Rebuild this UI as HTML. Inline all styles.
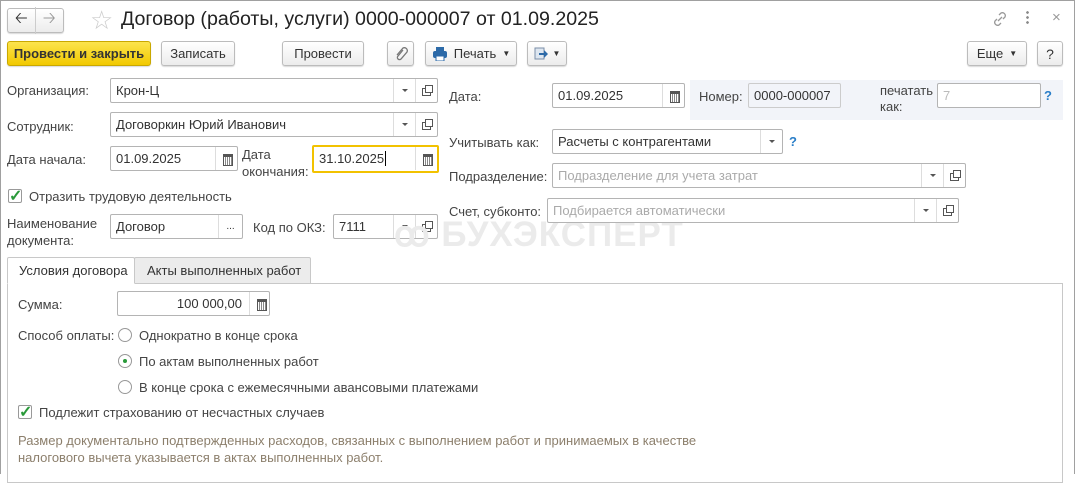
<!DOCTYPE html>
<html><head><meta charset="utf-8"><style>
*{box-sizing:border-box;margin:0;padding:0}
body{width:1075px;height:474px;background:#fff;font-family:"Liberation Sans",Arial,sans-serif;font-size:13px;color:#333;position:relative;overflow:hidden}
.a{position:absolute;white-space:nowrap}
.frame{position:absolute;left:0;top:0;width:1075px;height:474px;border:1px solid #a0a0a0;border-bottom:none}
.btn{position:absolute;height:25px;border:1px solid #bcbcbc;border-radius:3px;background:linear-gradient(#fff,#ececec);box-shadow:0 1px 1px rgba(0,0,0,.15);font-size:13px;color:#333;display:flex;align-items:center;justify-content:center}
.f{position:absolute;height:25px;border:1px solid #b4b4b4;border-radius:2px;background:#fff;padding-left:5px;line-height:23px;color:#333;font-size:13px}
.ph{color:#aaa}
.dd{position:absolute;top:0;width:22px;height:23px;border-left:1px solid #ddd}
.dd::after{content:"";position:absolute;left:8px;top:10px;border:3px solid transparent;border-top:3px solid #555;border-bottom:none}
.op{position:absolute;top:0;width:22px;height:23px;border-left:1px solid #ddd}
.op::before{content:"";position:absolute;left:6px;top:9px;width:7px;height:6px;border:1px solid #555}
.op::after{content:"";position:absolute;left:9px;top:6px;width:6px;height:6px;border:1px solid #555;background:#fff}
.cal{position:absolute;top:0;right:0;width:22px;height:23px;border-left:1px solid #ddd}
.cal::after{content:"";position:absolute;left:7px;top:7px;width:8px;height:8px;border:1px solid #555;border-top:3px solid #555;background:repeating-linear-gradient(90deg,#fff 0 1px,#888 1px 2px)}
.lbl{position:absolute;white-space:nowrap;color:#444}
.q{position:absolute;color:#2a7ec8;font-weight:bold}
.radio{position:absolute;width:14px;height:14px;border:1px solid #999;border-radius:50%;background:#fff}
.chk{position:absolute;width:14px;height:14px;border:1px solid #999;border-radius:2px;background:#fff}
</style></head><body>
<div class="frame"></div>
<div class="btn" style="left:7px;top:8px;width:57px;height:25px;justify-content:flex-start">
<span style="width:28px;text-align:center;font-size:16px;color:#333;border-right:1px solid #ccc">&#129120;</span><span style="width:28px;text-align:center;font-size:16px;color:#999">&#129122;</span></div>
<div class="a" style="left:90px;top:5px;font-size:26px;color:#ccc">☆</div>
<div class="a" style="left:121px;top:8px;font-size:19.6px;color:#222">Договор (работы, услуги) 0000-000007 от 01.09.2025</div>
<svg class="a" style="left:991px;top:10px" width="18" height="18" viewBox="0 0 18 18"><g fill="none" stroke="#999" stroke-width="1.3"><path d="M8 5l2-2a3 3 0 014 4l-2 2M10 13l-2 2a3 3 0 01-4-4l2-2M7 11l4-4"/></g></svg>
<div class="a" style="left:1026px;top:10px;width:3px;height:15px;background:radial-gradient(circle,#888 1.2px,transparent 1.5px) 0 0/3px 5px"></div>
<div class="a" style="left:1052px;top:9px;color:#999;font-size:15px">×</div>
<div class="btn" style="left:7px;top:41px;width:144px;background:linear-gradient(#fce44d,#f2c900);border-color:#c9a800;font-weight:bold;color:#333">Провести и закрыть</div>
<div class="btn" style="left:161px;top:41px;width:74px">Записать</div>
<div class="btn" style="left:282px;top:41px;width:82px">Провести</div>
<div class="btn" style="left:387px;top:41px;width:27px"><svg width="14" height="16" viewBox="0 0 14 16"><path d="M9 4L4 10a2 2 0 003 3l6-7a3 3 0 00-4-4L3 9" fill="none" stroke="#777" stroke-width="1.3"/></svg></div>
<div class="btn" style="left:425px;top:41px;width:92px"><svg width="16" height="14" viewBox="0 0 16 14" style="margin-right:6px"><rect x="4" y="0" width="8" height="4" fill="#2c6aa8"/><rect x="1" y="4" width="14" height="7" rx="2" fill="#2c6aa8"/><rect x="4" y="9" width="8" height="5" fill="#fff" stroke="#2c6aa8"/></svg>Печать <span style="font-size:8px;margin-left:6px">▼</span></div>
<div class="btn" style="left:527px;top:41px;width:40px"><svg width="14" height="14" viewBox="0 0 14 14"><rect x="1" y="1" width="9" height="11" fill="#dde6f0" stroke="#7a8ea8"/><path d="M5 6h5V3l4 4-4 4V8H5z" fill="#2c6aa8"/></svg><span style="font-size:8px;margin-left:5px">▼</span></div>
<div class="btn" style="left:967px;top:41px;width:60px">Еще <span style="font-size:8px;margin-left:6px">▼</span></div>
<div class="btn" style="left:1037px;top:41px;width:26px;font-size:14px">?</div>
<div class="lbl" style="left:7px;top:83px">Организация:</div>
<div class="f" style="left:110px;top:78px;width:328px">Крон-Ц<div class="dd" style="left:282px"></div><div class="op" style="left:304px"></div></div>
<div class="lbl" style="left:7px;top:119px">Сотрудник:</div>
<div class="f" style="left:110px;top:112px;width:328px">Договоркин Юрий Иванович<div class="dd" style="left:282px"></div><div class="op" style="left:304px"></div></div>
<div class="lbl" style="left:7px;top:152px">Дата начала:</div>
<div class="f" style="left:110px;top:146px;width:128px">01.09.2025<div class="cal"></div></div>
<div class="lbl" style="left:242px;top:146px;line-height:17px">Дата<br>окончания:</div>
<div class="f" style="left:312px;top:145px;width:127px;height:28px;border:2px solid #f2c200;line-height:23px">31.10.2025<span style="border-left:1px solid #000;margin-left:1px"></span><div class="cal"></div></div>
<div class="chk" style="left:8px;top:189px"></div>
<div class="a" style="left:9px;top:186px;color:#2a9a3a;font-size:16px;font-weight:bold">✓</div>
<div class="lbl" style="left:29px;top:189px">Отразить трудовую деятельность</div>
<div class="lbl" style="left:7px;top:215px;line-height:17px">Наименование<br>документа:</div>
<div class="f" style="left:110px;top:214px;width:133px">Договор<div style="position:absolute;left:107px;top:0;width:24px;height:23px;border-left:1px solid #ddd;text-align:center;font-size:10px">...</div></div>
<div class="lbl" style="left:253px;top:220px">Код по ОКЗ:</div>
<div class="f" style="left:333px;top:214px;width:105px">7111<div class="dd" style="left:59px"></div><div class="op" style="left:81px"></div></div>
<div class="a" style="left:394px;top:215px;font-size:35px;font-weight:bold;color:#ebebeb;letter-spacing:1px">ꝏ БУХЭКСПЕРТ</div>
<div class="lbl" style="left:449px;top:89px">Дата:</div>
<div class="f" style="left:552px;top:83px;width:133px">01.09.2025<div class="cal"></div></div>
<div class="a" style="left:690px;top:80px;width:373px;height:40px;background:#f2f4f9"></div>
<div class="lbl" style="left:699px;top:89px">Номер:</div>
<div class="f" style="left:748px;top:83px;width:93px;background:#f2f4f9;border-color:#ccc">0000-000007</div>
<div class="lbl" style="left:880px;top:83px;line-height:16px">печатать<br>как:</div>
<div class="f" style="left:937px;top:83px;width:104px;color:#bbb">7</div>
<div class="q" style="left:1044px;top:88px">?</div>
<div class="lbl" style="left:449px;top:135px">Учитывать как:</div>
<div class="f" style="left:552px;top:129px;width:231px">Расчеты с контрагентами<div class="dd" style="left:207px"></div></div>
<div class="q" style="left:789px;top:134px">?</div>
<div class="lbl" style="left:449px;top:169px">Подразделение:</div>
<div class="f" style="left:552px;top:163px;width:414px"><span class="ph">Подразделение для учета затрат</span><div class="dd" style="left:368px"></div><div class="op" style="left:390px"></div></div>
<div class="lbl" style="left:449px;top:204px">Счет, субконто:</div>
<div class="f" style="left:547px;top:198px;width:412px"><span class="ph">Подбирается автоматически</span><div class="dd" style="left:366px"></div><div class="op" style="left:388px"></div></div>
<div class="a" style="left:7px;top:283px;width:1056px;height:200px;border:1px solid #c8c8c8"></div>
<div class="a" style="left:134px;top:257px;width:177px;height:27px;border:1px solid #c8c8c8;background:#ececec;border-radius:2px 2px 0 0;padding:5px 0 0 12px">Акты выполненных работ</div>
<div class="a" style="left:7px;top:257px;width:128px;height:27px;border:1px solid #c8c8c8;border-bottom:1px solid #fff;background:#fff;border-radius:2px 2px 0 0;padding:5px 0 0 11px">Условия договора</div>
<div class="lbl" style="left:18px;top:297px">Сумма:</div>
<div class="f" style="left:117px;top:291px;width:153px;text-align:right;padding-right:27px">100 000,00<div class="cal" style="width:20px"></div></div>
<div class="lbl" style="left:18px;top:328px">Способ оплаты:</div>
<div class="radio" style="left:118px;top:328px"></div>
<div class="lbl" style="left:139px;top:328px">Однократно в конце срока</div>
<div class="radio" style="left:118px;top:354px"><div style="position:absolute;left:4px;top:4px;width:4px;height:4px;border-radius:50%;background:#2a9a3a"></div></div>
<div class="lbl" style="left:139px;top:354px">По актам выполненных работ</div>
<div class="radio" style="left:118px;top:380px"></div>
<div class="lbl" style="left:139px;top:380px">В конце срока с ежемесячными авансовыми платежами</div>
<div class="chk" style="left:18px;top:405px"></div>
<div class="a" style="left:19px;top:402px;color:#2a9a3a;font-size:16px;font-weight:bold">✓</div>
<div class="lbl" style="left:39px;top:405px">Подлежит страхованию от несчастных случаев</div>
<div class="a" style="left:18px;top:432px;color:#8c7f6c;line-height:17px">Размер документально подтвержденных расходов, связанных с выполнением работ и принимаемых в качестве<br>налогового вычета указывается в актах выполненных работ.</div>
</body></html>
